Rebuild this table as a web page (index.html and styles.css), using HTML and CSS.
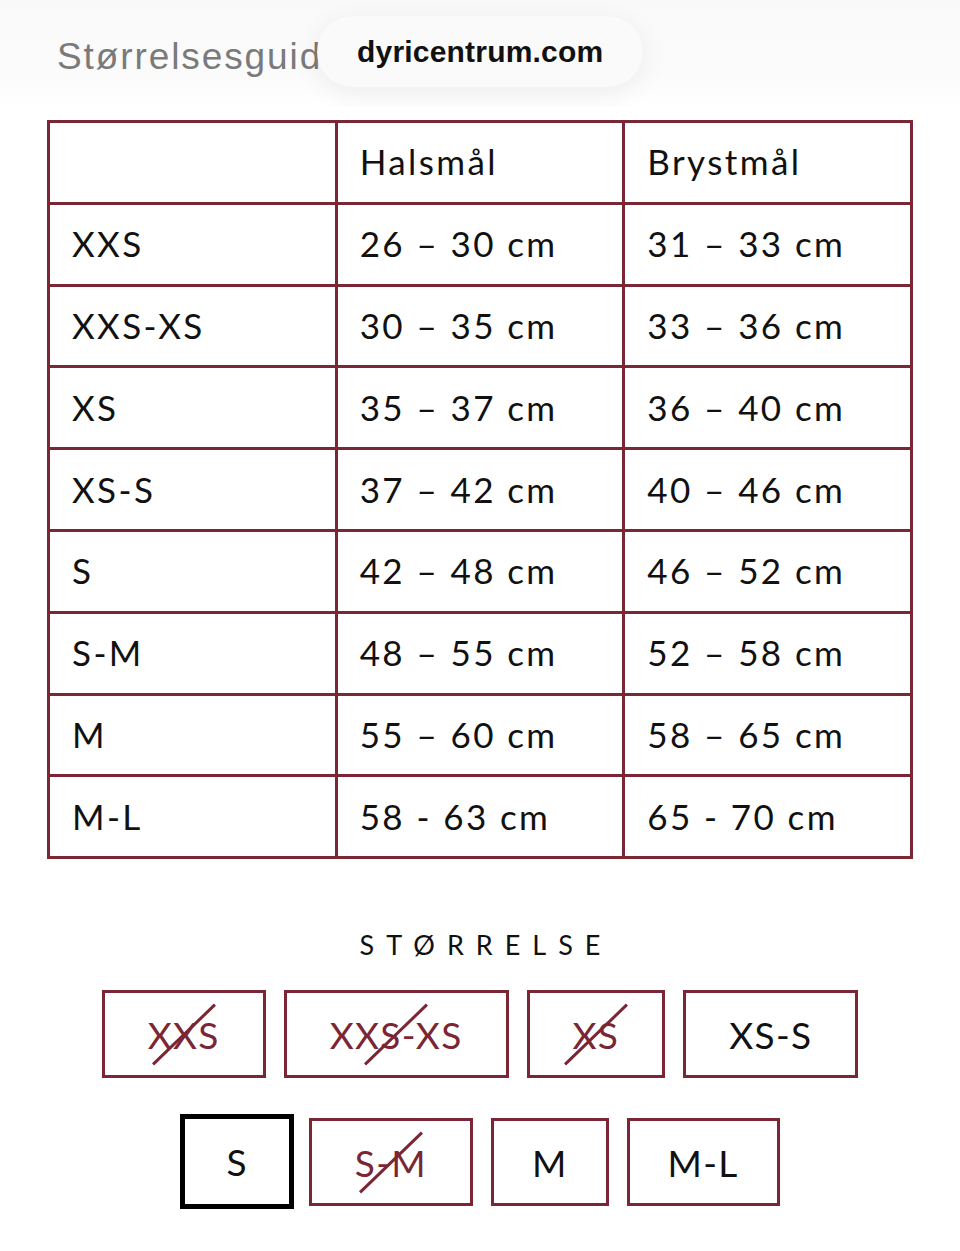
FILE: index.html
```html
<!DOCTYPE html>
<html lang="no">
<head>
<meta charset="utf-8">
<title>Størrelsesguide</title>
<link rel="stylesheet" href="styles.css">
</head>
<body>
<header class="topbar">
  <h1 class="title">Størrelsesguide</h1>
  <div class="url-pill">dyricentrum.com</div>
</header>
<main class="content">
  <table class="size-table">
    <thead>
      <tr><th></th><th>Halsmål</th><th>Brystmål</th></tr>
    </thead>
    <tbody>
      <tr><td>XXS</td><td>26 – 30 cm</td><td>31 – 33 cm</td></tr>
      <tr><td>XXS-XS</td><td>30 – 35 cm</td><td>33 – 36 cm</td></tr>
      <tr><td>XS</td><td>35 – 37 cm</td><td>36 – 40 cm</td></tr>
      <tr><td>XS-S</td><td>37 – 42 cm</td><td>40 – 46 cm</td></tr>
      <tr><td>S</td><td>42 – 48 cm</td><td>46 – 52 cm</td></tr>
      <tr><td>S-M</td><td>48 – 55 cm</td><td>52 – 58 cm</td></tr>
      <tr><td>M</td><td>55 – 60 cm</td><td>58 – 65 cm</td></tr>
      <tr><td>M-L</td><td>58 - 63 cm</td><td>65 - 70 cm</td></tr>
    </tbody>
  </table>

  <section class="size-picker">
    <h2 class="picker-label">STØRRELSE</h2>
    <div class="options">
      <div class="row">
        <span class="opt soldout">XXS</span>
        <span class="opt soldout">XXS-XS</span>
        <span class="opt soldout">XS</span>
        <span class="opt">XS-S</span>
      </div>
      <div class="row">
        <span class="opt selected">S</span>
        <span class="opt soldout">S-M</span>
        <span class="opt narrow">M</span>
        <span class="opt narrow">M-L</span>
      </div>
    </div>
  </section>
</main>
</body>
</html>
```

FILE: styles.css
```css
* { box-sizing: border-box; }
html, body { margin: 0; padding: 0; background: #fff; }
body {
  font-family: "Lato", "DejaVu Sans", sans-serif;
  color: #111;
  width: 960px;
  min-height: 1251px;
  overflow: hidden;
}
.topbar {
  position: relative;
  height: 107px;
  background: linear-gradient(#f9f9f9, #fbfbfb 70%, #ffffff);
  overflow: hidden;
}
.title {
  margin: 0;
  padding: 36px 0 0 57px;
  font-family: "Liberation Sans", "DejaVu Sans", sans-serif;
  font-weight: 400;
  font-size: 37px;
  letter-spacing: 1.9px;
  color: #7a7a7a;
  white-space: nowrap;
}
.url-pill {
  position: absolute;
  left: 318px;
  top: 17px;
  width: 324px;
  height: 70px;
  border-radius: 35px;
  background: #fafafa;
  box-shadow: 0 6px 28px rgba(0,0,0,0.07), 0 0 0 1px rgba(255,255,255,0.9);
  display: flex;
  align-items: center;
  padding-left: 39px;
  font-family: "Liberation Sans", "DejaVu Sans", sans-serif;
  font-weight: 700;
  font-size: 30px;
  letter-spacing: 0.2px;
  color: #111;
}
.content {
  padding: 13px 47px 0 47px;
}
.size-table {
  width: 866px;
  border-collapse: collapse;
  table-layout: fixed;
  border: 3px solid #7a2634;
}
.size-table th,
.size-table td {
  border: 3px solid #7a2634;
  height: 81.8px;
  padding: 0 0 2px 22px;
  text-align: left;
  font-weight: 400;
  font-size: 35px;
  letter-spacing: 2.4px;
  color: #111;
  vertical-align: middle;
}
.size-picker {
  display: flex;
  flex-direction: column;
  align-items: center;
  padding-top: 69px;
}
.picker-label {
  margin: 0 0 29px 0;
  font-weight: 400;
  font-size: 27px;
  letter-spacing: 12px;
  padding-left: 12px;
  color: #111;
}
.options {
  display: flex;
  flex-direction: column;
  align-items: center;
  gap: 40px;
}
.row {
  display: flex;
  gap: 18px;
  align-items: center;
}
.opt {
  position: relative;
  display: flex;
  align-items: center;
  justify-content: center;
  height: 88px;
  padding: 0 43px;
  border: 3px solid #7a2634;
  font-size: 37px;
  letter-spacing: 1.3px;
  color: #111;
}
.opt.narrow { padding: 0 38px; }
.opt.soldout { color: #7a2634; }
.opt.soldout::after {
  content: "";
  position: absolute;
  left: 50%;
  top: 50%;
  width: 86px;
  height: 3px;
  margin-left: -43px;
  margin-top: -1px;
  background: #7a2634;
  transform: rotate(-44deg);
}
.opt.selected {
  height: 95px;
  margin: -4px -3px -3px 0;
  border: 5px solid #000;
  padding: 0 41px;
}
```
